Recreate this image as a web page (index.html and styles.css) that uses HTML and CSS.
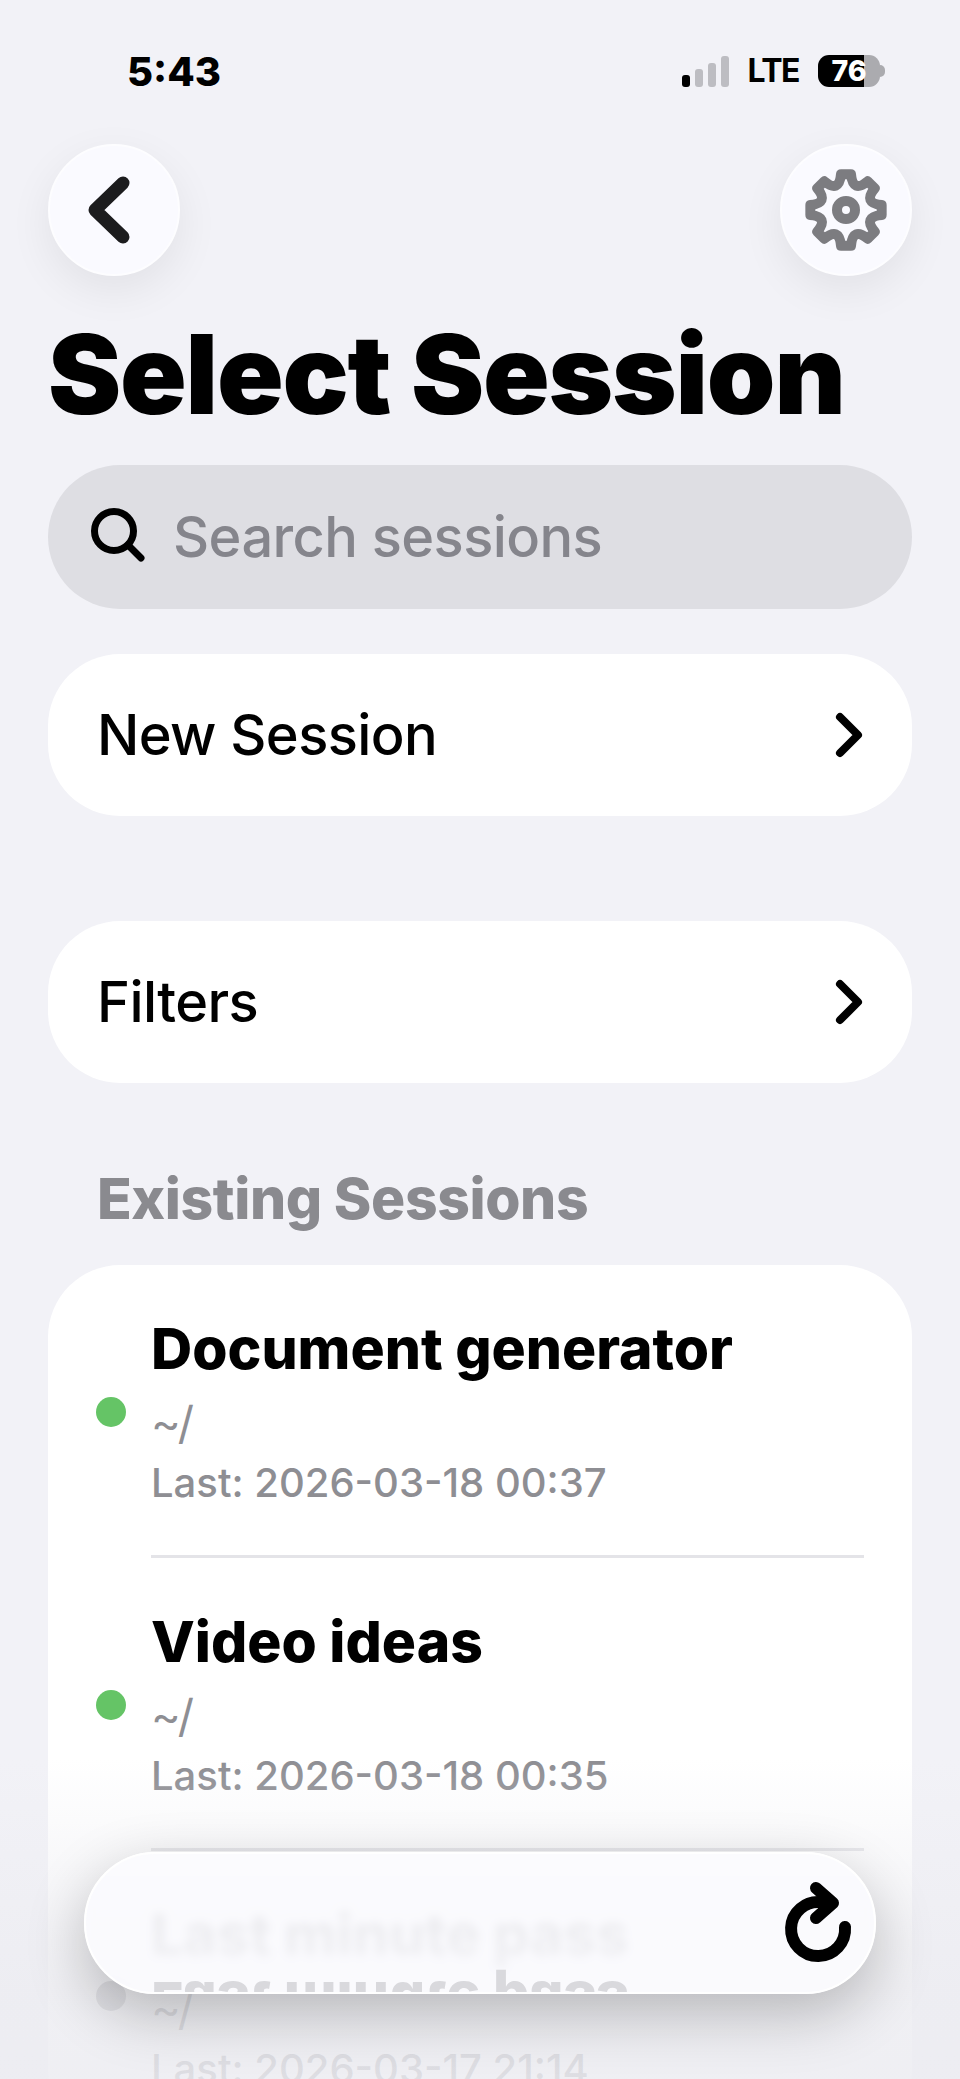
FILE: index.html

```html
<!DOCTYPE html>
<html lang="en">
<head>
  <meta charset="UTF-8" />
  <meta name="viewport" content="width=device-width, initial-scale=1.0"/>
  <title>Select Session</title>
  <link rel="stylesheet" href="styles.css">
</head>
<body>

<div class="screen">

  <!-- Status bar -->
  <div class="statusbar">
    <span class="clock">5:43</span>
    <div class="status-right">
      <div class="signal">
        <i class="on"></i><i></i><i></i><i></i>
      </div>
      <span class="lte">LTE</span>
      <div class="battery"><span>76</span></div>
    </div>
  </div>

  <div class="topbar">
    <button class="round-btn" aria-label="Back">
      <svg width="54" height="76" viewBox="0 0 54 76">
        <polyline points="36,11 8,38 36,65" class="back-icon"/>
      </svg>
    </button>
    <button class="round-btn" aria-label="Settings">
      <svg width="92" height="92" viewBox="-46 -46 92 92" class="gear">
        <path d="M-5.01 -35.65 L5.01 -35.65 Q6.89 -16.63 21.67 -28.75 L28.75 -21.67 Q16.63 -6.89 35.65 -5.01 L35.65 5.01 Q16.63 6.89 28.75 21.67 L21.67 28.75 Q6.89 16.63 5.01 35.65 L-5.01 35.65 Q-6.89 16.63 -21.67 28.75 L-28.75 21.67 Q-16.63 6.89 -35.65 5.01 L-35.65 -5.01 Q-16.63 -6.89 -28.75 -21.67 L-21.67 -28.75 Q-6.89 -16.63 -5.01 -35.65 Z"/>
        <circle r="9"/>
      </svg>
    </button>
  </div>

  <h1 class="title">Select Session</h1>

  <div class="search">
    <svg width="60" height="60" viewBox="0 0 60 60" class="search-icon">
      <circle cx="26" cy="24" r="19.5"/>
      <line x1="40" y1="38" x2="53" y2="51"/>
    </svg>
    <span>Search sessions</span>
  </div>

  <div class="nav-row">
    <span>New Session</span>
    <svg width="30" height="48" viewBox="0 0 30 48" class="chevron"><polyline points="6,6 24,24 6,42"/></svg>
  </div>

  <div class="nav-row filters">
    <span>Filters</span>
    <svg width="30" height="48" viewBox="0 0 30 48" class="chevron"><polyline points="6,6 24,24 6,42"/></svg>
  </div>

  <h2 class="section-title">Existing Sessions</h2>

  <div class="sessions">
    <div class="session">
      <span class="dot"></span>
      <div class="session-body">
        <div class="session-name">Document generator</div>
        <div class="session-path">~/</div>
        <div class="session-last">Last: 2026-03-18 00:37</div>
      </div>
    </div>
    <div class="session">
      <span class="dot"></span>
      <div class="session-body">
        <div class="session-name">Video ideas</div>
        <div class="session-path">~/</div>
        <div class="session-last">Last: 2026-03-18 00:35</div>
      </div>
    </div>
    <div class="session">
      <span class="dot idle"></span>
      <div class="session-body">
        <div class="session-name">Last minute pass</div>
        <div class="session-path">~/</div>
        <div class="session-last">Last: 2026-03-17 21:14</div>
      </div>
    </div>
  </div>

  <!-- Fade + floating bar -->
  <div class="fade"></div>
  <div class="floatbar">
    <div class="mirror" aria-hidden="true">Last minute pass</div>
    <svg width="76" height="88" viewBox="0 0 76 88" class="refresh">
      <path d="M66 48 A27 27 0 1 1 42 23.2"/>
      <polyline points="37,9 54,24 37,39"/>
    </svg>
  </div>

</div>

</body>
</html>
```

FILE: styles.css

```css
* {
  box-sizing: border-box;
}
html, body {
  margin: 0;
  padding: 0;
  height: 100%;
  overflow: hidden;
}
body {
  background-color: #f2f2f7;
  font-family: Inter, "Noto Sans", sans-serif;
  color: #000;
}
.screen {
  position: relative;
  height: 2079px;
  overflow: hidden;
  padding: 0 48px;
}

/* status bar */
.statusbar {
  height: 144px;
  display: flex;
  justify-content: space-between;
  align-items: flex-start;
  padding: 48px 32px 0 79px;
}
.clock {
  font-size: 40px;
  font-weight: 800;
  line-height: 48px;
}
.status-right {
  display: flex;
  align-items: center;
  padding-top: 7px;
}
.signal {
  display: flex;
  align-items: flex-end;
  gap: 5px;
  height: 31px;
  margin-right: 19px;
}
.signal i {
  display: block;
  width: 8px;
  border-radius: 3px;
  background-color: #bdbdc2;
}
.signal i:nth-child(1) { height: 12px; }
.signal i:nth-child(2) { height: 18px; }
.signal i:nth-child(3) { height: 24px; }
.signal i:nth-child(4) { height: 31px; }
.signal i.on {
  background-color: #000;
}
.lte {
  font-size: 32px;
  font-weight: 700;
  line-height: 32px;
  letter-spacing: -1.5px;
  margin-right: 19px;
}
.battery {
  position: relative;
  width: 62px;
  height: 32px;
  border-radius: 11px;
  background: linear-gradient(90deg, #000 74%, #ababaf 74%);
  color: #fff;
  font-size: 28.5px;
  font-weight: 800;
  line-height: 32px;
  text-align: center;
}
.battery span {
  display: block;
}
.battery::after {
  content: "";
  position: absolute;
  right: -5px;
  top: 10px;
  width: 5px;
  height: 12px;
  border-radius: 0 6px 6px 0;
  background-color: #ababaf;
}

/* top buttons */
.topbar {
  display: flex;
  justify-content: space-between;
  margin-bottom: 35px;
}
.round-btn {
  width: 132px;
  height: 132px;
  border-radius: 50%;
  border: 2px solid #fdfdff;
  background-color: #fafaff;
  padding: 0;
  display: flex;
  align-items: center;
  justify-content: center;
  box-shadow: 0 14px 44px rgba(0,0,0,0.07);
}
.back-icon {
  fill: none;
  stroke: #1c1c1e;
  stroke-width: 13;
  stroke-linecap: round;
  stroke-linejoin: round;
}
.gear {
  fill: none;
  stroke: #7c7c80;
  stroke-width: 10;
  stroke-linejoin: round;
}

.title {
  margin: 0 0 28px 0;
  font-size: 110px;
  font-weight: 900;
  line-height: 126px;
  letter-spacing: -1.2px;
}

/* search */
.search {
  height: 144px;
  border-radius: 72px;
  background-color: #dedee3;
  display: flex;
  align-items: center;
  padding-left: 40px;
  gap: 25px;
  margin-bottom: 45px;
  font-size: 56px;
  font-weight: 500;
  letter-spacing: -0.6px;
  color: #85858c;
}
.search-icon {
  fill: none;
  stroke: #000;
  stroke-width: 7;
  stroke-linecap: round;
}

/* new session / filters */
.nav-row {
  height: 162px;
  border-radius: 72px;
  background-color: #fff;
  display: flex;
  align-items: center;
  justify-content: space-between;
  padding: 0 48px 0 49px;
  font-size: 56px;
  font-weight: 500;
  letter-spacing: -0.6px;
}
.filters {
  margin-top: 105px;
}
.chevron {
  fill: none;
  stroke: #000;
  stroke-width: 8;
  stroke-linecap: round;
  stroke-linejoin: round;
}

.section-title {
  margin: 82px 0 32px 49px;
  font-size: 57px;
  font-weight: 800;
  line-height: 68px;
  letter-spacing: -0.4px;
  color: #8a8a8f;
}

/* session list */
.sessions {
  background-color: #fff;
  border-radius: 72px;
  padding: 0 48px;
}
.session {
  display: flex;
  align-items: center;
  gap: 25px;
}
.dot {
  flex: none;
  width: 30px;
  height: 30px;
  border-radius: 50%;
  background-color: #65c466;
}
.dot.idle {
  background-color: #aeaeb2;
}
.session-body {
  flex: 1;
  padding: 51px 0 49px 0;
  border-bottom: 3px solid #e4e4e8;
}
.session:last-child .session-body {
  border-bottom: none;
}
.session-name {
  font-size: 57px;
  font-weight: 800;
  line-height: 66px;
}
.session-path {
  margin-top: 16px;
  font-size: 45px;
  letter-spacing: -3px;
  line-height: 50px;
  color: #8e8e93;
}
.session-last {
  margin-top: 12px;
  font-size: 40px;
  font-weight: 500;
  line-height: 46px;
  color: #8e8e93;
}

/* bottom overlay */
.fade {
  position: absolute;
  left: 0;
  right: 0;
  bottom: 0;
  height: 320px;
  background: linear-gradient(180deg, rgba(236,236,241,0) 0%, rgba(236,236,241,0.8) 72%, rgba(236,236,241,0.85) 100%);
}
.floatbar {
  position: absolute;
  left: 84px;
  bottom: 85px;
  width: 792px;
  height: 142px;
  border-radius: 71px;
  border: 2px solid #fff;
  background-color: rgba(251,251,254,0.88);
  backdrop-filter: blur(5px);
  box-shadow: 0 20px 60px rgba(0,0,0,0.24);
  display: flex;
  align-items: center;
  justify-content: flex-end;
  padding-right: 19px;
  overflow: hidden;
}
.mirror {
  position: absolute;
  left: 65px;
  top: 115px;
  font-size: 57px;
  font-weight: 800;
  line-height: 66px;
  color: #d9d9dd;
  transform: scaleY(-1);
  filter: blur(0.6px);
}
.refresh {
  fill: none;
  stroke: #000;
  stroke-width: 12;
  stroke-linecap: round;
  stroke-linejoin: round;
}
```
